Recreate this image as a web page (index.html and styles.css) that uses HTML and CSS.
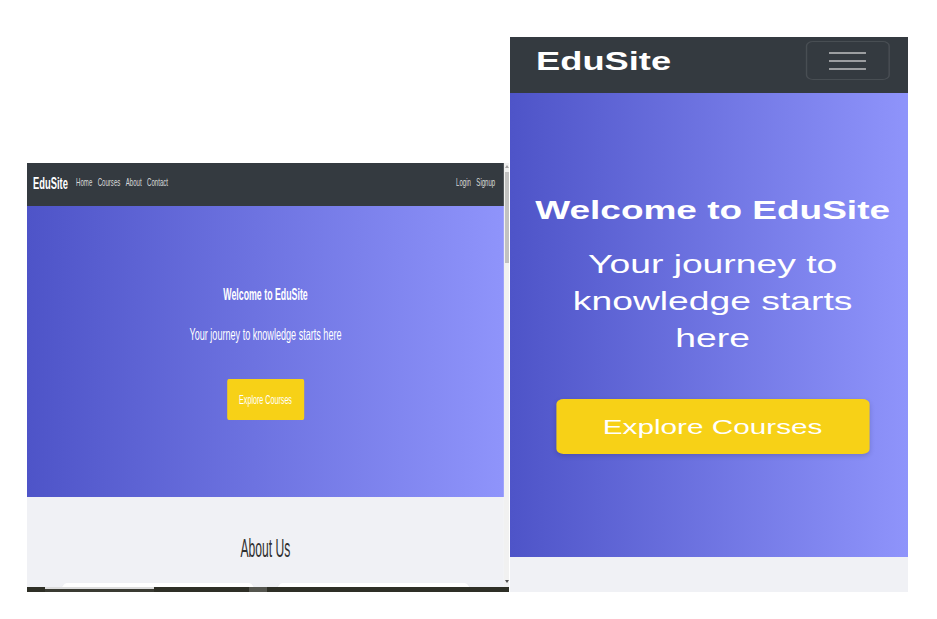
FILE: index.html
```html
<!DOCTYPE html>
<html lang="en">
<head>
<meta charset="utf-8">
<title>EduSite</title>
<link rel="stylesheet" href="styles.css">
</head>
<body>
<div class="canvas">
  <div class="desk">
    <div class="desk-main">
      <div class="desk-view">
        <div class="desk-page">
          <nav class="d-nav">
            <span class="d-brand">EduSite</span>
            <ul class="d-links">
              <li>Home</li><li>Courses</li><li>About</li><li>Contact</li>
            </ul>
            <ul class="d-links d-auth">
              <li>Login</li><li>Signup</li>
            </ul>
          </nav>
          <section class="d-hero">
            <h1>Welcome to EduSite</h1>
            <p>Your journey to knowledge starts here</p>
            <a class="d-btn">Explore Courses</a>
          </section>
          <section class="d-about">
            <h2>About Us</h2>
            <div class="d-cards">
              <div class="d-card"></div>
              <div class="d-card"></div>
            </div>
          </section>
        </div>
      </div>
      <div class="scrollbar">
        <span class="sb-up"></span>
        <span class="sb-thumb"></span>
        <span class="sb-fill"></span>
        <span class="sb-down"></span>
      </div>
    </div>
    <div class="taskstrip">
      <span class="ts-light"></span>
      <span class="ts-mid"></span>
    </div>
  </div>

  <div class="mobile">
    <div class="m-page">
      <nav class="m-nav">
        <span class="m-brand">EduSite</span>
        <button class="m-toggler" type="button" aria-label="Menu">
          <svg class="m-burger" width="25.5" height="18" viewBox="0 0 25.5 18" preserveAspectRatio="none">
            <line x1="0" y1="1" x2="25.5" y2="1"/>
            <line x1="0" y1="9" x2="25.5" y2="9"/>
            <line x1="0" y1="17" x2="25.5" y2="17"/>
          </svg>
        </button>
      </nav>
      <section class="m-hero">
        <h1>Welcome to EduSite</h1>
        <p>Your journey to knowledge starts here</p>
        <a class="m-btn">Explore Courses</a>
      </section>
      <section class="m-about"></section>
    </div>
  </div>
</div>
</body>
</html>
```

FILE: styles.css
```css
html, body {
  margin: 0;
  background: #ffffff;
  font-family: "Liberation Sans", Arial, sans-serif;
}

.canvas {
  display: flex;
  align-items: flex-start;
  gap: 1px;
  padding-left: 27px;
}

/* ---------- Desktop screenshot (left) ---------- */
.desk {
  margin-top: 163px;
  width: 482px;
  display: flex;
  flex-direction: column;
}

.desk-main {
  display: flex;
  height: 424px;
}

.desk-view {
  width: 477px;
  height: 424px;
  overflow: hidden;
}

.desk-page {
  width: 867.3px;
  transform: scaleX(0.55);
  transform-origin: 0 0;
}

.d-nav {
  height: 43px;
  box-sizing: border-box;
  background: #343a40;
  display: flex;
  align-items: center;
  padding: 0 11px 2px;
}

.d-brand {
  color: #ffffff;
  font-weight: bold;
  font-size: 17px;
  margin-right: 10px;
}

.d-links {
  list-style: none;
  margin: 0 0 4px;
  padding: 0;
  display: flex;
}

.d-links li {
  color: rgba(255, 255, 255, 0.82);
  font-size: 11px;
  padding: 0 5px;
}

.d-auth {
  margin-left: auto;
}

.d-hero {
  background: linear-gradient(to right, #4e54c8, #8f94fb);
  color: #ffffff;
  text-align: center;
  padding: 79px 0 77px;
}

.d-hero h1 {
  font-size: 16px;
  font-weight: bold;
  line-height: 1.2;
  margin: 0 0 18px;
}

.d-hero p {
  font-size: 16.5px;
  line-height: 24px;
  margin: 0 0 32.5px;
}

.d-btn {
  display: inline-block;
  background: #f7d117;
  color: #ffffff;
  font-size: 13px;
  line-height: 21px;
  padding: 10px 22px;
  border-radius: 3px;
}

.d-about {
  background: #f0f1f5;
  height: 90px;
  box-sizing: border-box;
  padding-top: 36px;
  text-align: center;
  overflow: hidden;
}

.d-about h2 {
  display: inline-block;
  font-size: 25px;
  font-weight: normal;
  color: #2f2f2f;
  line-height: 30px;
  margin: 0 0 20px;
  transform: scaleX(0.88);
}

.d-cards {
  display: flex;
  justify-content: center;
  gap: 40px;
}

.d-card {
  width: 352px;
  height: 30px;
  background: #ffffff;
  border-radius: 10px;
  box-shadow: 0 1px 3px rgba(0, 0, 0, 0.06);
}

.scrollbar {
  width: 5px;
  background: #f1f1f1;
  display: flex;
  flex-direction: column;
  align-items: center;
}

.sb-up {
  margin-top: 2px;
  width: 0;
  height: 0;
  border-left: 2px solid transparent;
  border-right: 2px solid transparent;
  border-bottom: 3px solid #a3a3a3;
}

.sb-thumb {
  margin-top: 4px;
  width: 4px;
  height: 91px;
  background: #c1c1c1;
}

.sb-fill {
  flex: 1;
}

.sb-down {
  margin-bottom: 4px;
  width: 0;
  height: 0;
  border-left: 2px solid transparent;
  border-right: 2px solid transparent;
  border-top: 3px solid #505050;
}

.taskstrip {
  height: 5px;
  background: #2e2f26;
  display: flex;
  padding-left: 18px;
}

.ts-light {
  width: 109px;
  background: linear-gradient(#dcdcdc 0 2px, #3a3b33 2px);
}

.ts-mid {
  width: 18px;
  margin-left: 95px;
  background: #55564f;
}

/* ---------- Mobile screenshot (right) ---------- */
.mobile {
  margin-top: 37px;
  width: 398px;
  height: 555px;
  overflow: hidden;
}

.m-page {
  width: 274.5px;
  transform: scaleX(1.45);
  transform-origin: 0 0;
}

.m-nav {
  height: 56px;
  box-sizing: border-box;
  background: #343a40;
  display: flex;
  justify-content: space-between;
  align-items: flex-start;
  padding: 5px 12.5px 0 18px;
}

.m-brand {
  color: #ffffff;
  font-weight: bold;
  font-size: 25px;
  line-height: 39px;
}

.m-toggler {
  width: 58px;
  height: 39px;
  box-sizing: border-box;
  margin-top: -1px;
  background: transparent;
  border: 1px solid rgba(255, 255, 255, 0.1);
  border-radius: 5px;
  padding: 0;
  display: flex;
  align-items: center;
  justify-content: center;
}

.m-burger line {
  stroke: #9c9ea1;
  stroke-width: 2;
}

.m-hero {
  height: 464px;
  box-sizing: border-box;
  background: linear-gradient(to right, #4e54c8, #8f94fb);
  color: #ffffff;
  text-align: center;
  padding: 102px 0 0 5px;
}

.m-hero h1 {
  font-size: 25.5px;
  font-weight: bold;
  line-height: 30px;
  white-space: nowrap;
  margin: 0 0 20.5px;
}

.m-hero p {
  font-size: 25.7px;
  line-height: 37px;
  padding: 0 17px;
  margin: 0 0 42.5px;
}

.m-btn {
  display: inline-block;
  background: #f7d117;
  color: #ffffff;
  font-size: 20.5px;
  line-height: 31px;
  padding: 12px 32px;
  border-radius: 5px;
  box-shadow: 0 2px 4px rgba(0, 0, 0, 0.15);
}

.m-about {
  height: 35px;
  background: #f0f1f5;
}
```
